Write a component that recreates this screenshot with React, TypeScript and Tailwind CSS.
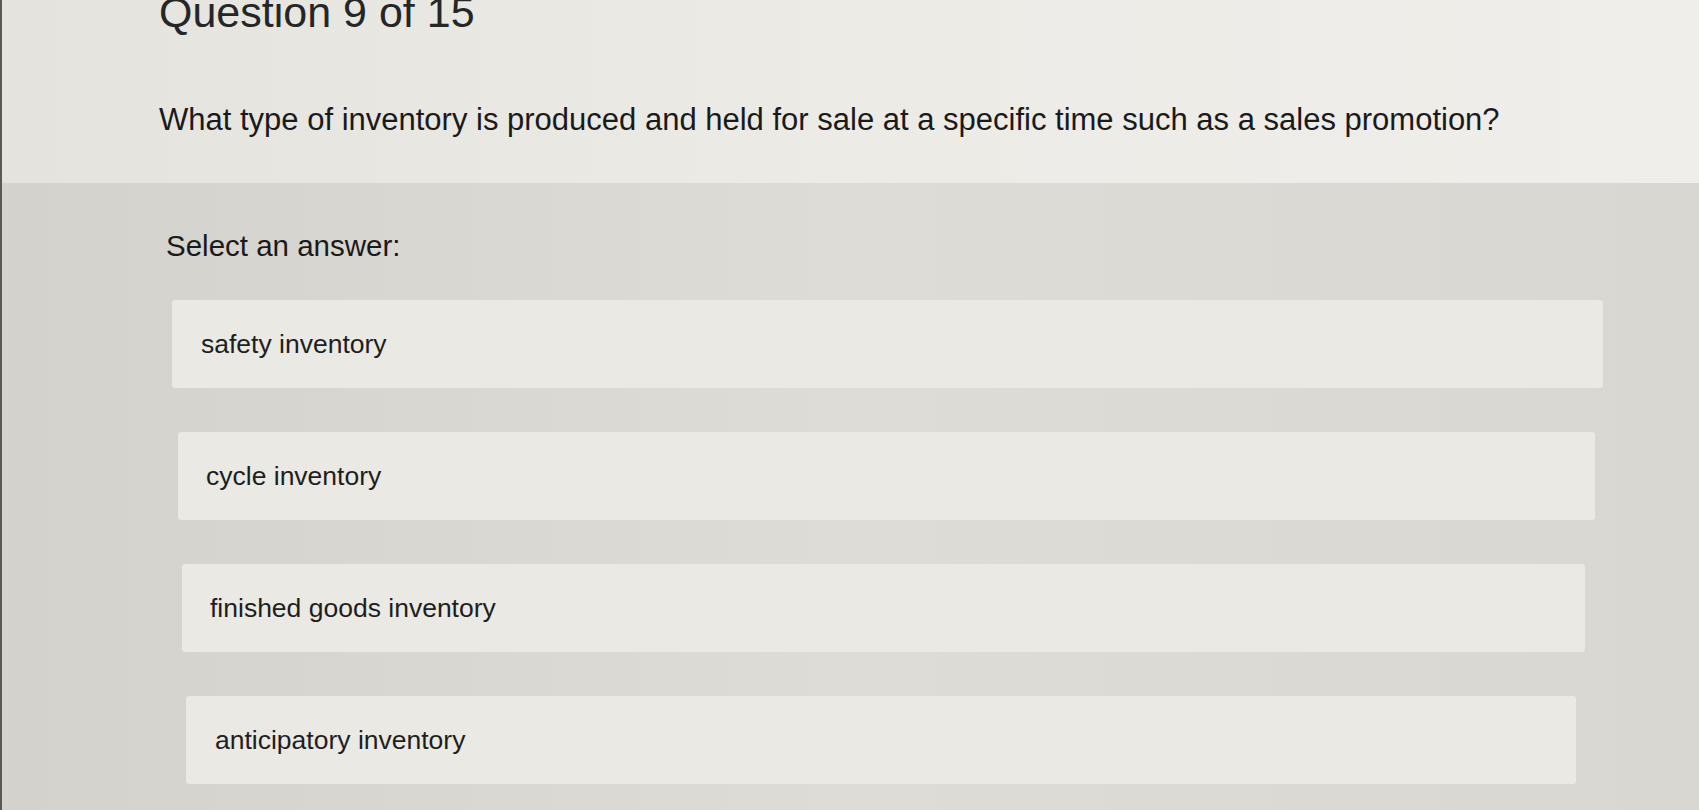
import React from "react";

const options = [
  { label: "safety inventory", cls: "ml-[170px] w-[1431px] pl-[29px]" },
  { label: "cycle inventory", cls: "ml-[176px] w-[1417px] pl-[28px]" },
  { label: "finished goods inventory", cls: "ml-[180px] w-[1403px] pl-[28px]" },
  { label: "anticipatory inventory", cls: "ml-[184px] w-[1390px] pl-[29px]" },
];

export default function App() {
  return (
    <div
      className="w-[1699px] h-[810px] overflow-hidden flex flex-col border-l-[2px] border-[#5a5955] bg-[#dad9d4] text-[#1d1d1d]"
      style={{ fontFamily: '"Liberation Sans", Arial, sans-serif' }}
    >
      <div className="h-[183px] shrink-0 bg-gradient-to-r from-[#e4e3de] via-[#ecebe6] to-[#efeeea] pl-[157px] flex flex-col">
        <h1 className="mt-[-9px] text-[43px] leading-[43px] font-normal text-[#262626]">
          Question 9 of 15
        </h1>
        <p className="mt-[68px] text-[31px] leading-[36px] text-[#1a1a1a]">
          What type of inventory is produced and held for sale at a specific time such as a sales promotion?
        </p>
      </div>
      <div className="flex-1 flex flex-col bg-gradient-to-r from-[#d3d2cd] via-[#dddcd7] to-[#d8d7d2]">
        <p className="mt-[46px] ml-[164px] text-[29.5px] leading-[34px] text-[#1a1a1a]">
          Select an answer:
        </p>
        <div className="mt-[37px] flex flex-col gap-[44px]">
          {options.map((o) => (
            <div
              key={o.label}
              className={`${o.cls} h-[88px] flex items-center rounded-[3px] bg-[#eae9e4]`}
            >
              <span className="text-[26.5px] leading-[32px] text-[#1e1e1e]">{o.label}</span>
            </div>
          ))}
        </div>
      </div>
    </div>
  );
}
